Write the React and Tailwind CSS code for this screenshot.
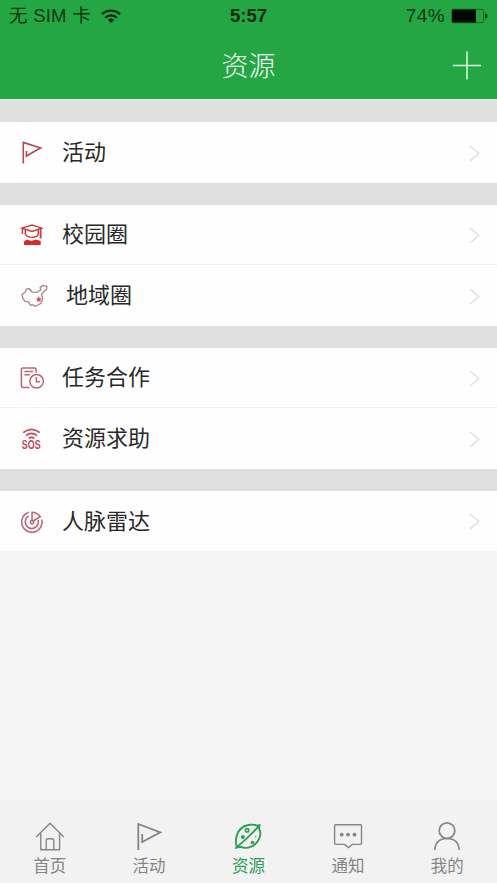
import { useState } from "react";

const GROUPS = [
  [{ label: "活动", icon: FlagIcon }],
  [
    { label: "校园圈", icon: CampusIcon },
    { label: "地域圈", icon: MapIcon, wide: true },
  ],
  [
    { label: "任务合作", icon: TaskIcon },
    { label: "资源求助", icon: SosIcon },
  ],
  [{ label: "人脉雷达", icon: RadarIcon }],
];

const TABS = [
  { label: "首页", icon: HomeTabIcon },
  { label: "活动", icon: FlagTabIcon },
  { label: "资源", icon: ResourceTabIcon },
  { label: "通知", icon: MessageTabIcon },
  { label: "我的", icon: UserTabIcon },
];

export default function App() {
  const [activeTab, setActiveTab] = useState(2);

  return (
    <div className="flex h-[883px] w-[497px] flex-col overflow-hidden bg-[#f5f5f5] font-['Liberation_Sans','Noto_Sans_CJK_SC',sans-serif]">
      <header className="h-[101px] shrink-0 border-b-2 border-[#d9eddf] bg-[#25a645]">
        <StatusBar />
        <div className="grid h-[67px] grid-cols-[60px_1fr_60px] items-center">
          <h1 className="col-start-2 pt-[2px] text-center text-[27px] leading-[66px] font-light text-[#f2fff4]">资源</h1>
          <button className="flex justify-center text-[#d9ffdf]" aria-label="添加">
            <svg className="h-[30px] w-[30px]" viewBox="0 0 30 30" fill="none" stroke="currentColor" strokeWidth="1.5">
              <path d="M1 14.5h28M15 .5v28" />
            </svg>
          </button>
        </div>
      </header>

      <main className="flex-1">
        <div className="flex flex-col gap-[22px] bg-[#e0e0e0] pt-[21px]">
          {GROUPS.map((rows) => (
            <section className="divide-y divide-[#f3f3f3] bg-[#fefefe]" key={rows[0].label}>
              {rows.map((row) => (
                <Row key={row.label} {...row} />
              ))}
            </section>
          ))}
        </div>
      </main>

      <nav className="grid h-[83px] shrink-0 grid-cols-5 bg-[#f2f2f2]">
        {TABS.map(({ label, icon: Icon }, index) => (
          <button
            className={`flex flex-col items-center pt-[20px] ${index === activeTab ? "text-[#2f9f58]" : "text-[#858585]"}`}
            key={label}
            onClick={() => setActiveTab(index)}
          >
            <Icon />
            <span className="mt-[2px] text-[16.5px] leading-[24px]">{label}</span>
          </button>
        ))}
      </nav>
    </div>
  );
}

function StatusBar() {
  return (
    <div className="grid h-8 grid-cols-3 items-center pr-[9px] pl-[9px] text-[18.5px] text-[#07380f]">
      <div className="flex items-center gap-[10px]">
        <span className="leading-8 tracking-[0.25px] whitespace-nowrap">无 SIM 卡</span>
        <svg className="h-[15px] w-[20px]" viewBox="0 0 20 15" fill="none" stroke="#042a0a" strokeWidth="2.4">
          <path d="M1 5.2a13 13 0 0 1 18 0M4.3 8.7a8.2 8.2 0 0 1 11.4 0" />
          <path d="M10 14 6.9 11a4.5 4.5 0 0 1 6.2 0Z" fill="#042a0a" stroke="none" />
        </svg>
      </div>
      <span className="text-center leading-8 font-bold text-[#062b0c]">5:57</span>
      <div className="flex items-center justify-end gap-[6px]">
        <span className="text-[19px] leading-8 tracking-[0.4px]">74%</span>
        <svg className="h-[16px] w-[37px]" viewBox="0 0 37 16">
          <rect x=".75" y="1.25" width="32" height="13.5" rx="2" fill="none" stroke="#11691f" />
          <rect x="1" y="1.5" width="24" height="13" rx="1" fill="#010a02" />
          <path d="M34 5.2q2.6.6 2.6 2.8T34 10.8Z" fill="#07380f" />
        </svg>
      </div>
    </div>
  );
}

function Row({ label, icon: Icon, wide }) {
  return (
    <button className="flex h-[60.5px] w-full items-center pt-[2px] pr-[17px] pl-[18px] text-left">
      <Icon />
      <span className={`flex-1 text-[22px] leading-[58px] text-[#292929] ${wide ? "pl-[16px]" : "pl-[12px]"}`}>{label}</span>
      <svg className="h-[17px] w-[11px]" viewBox="0 0 11 17" fill="none" stroke="#e0e0e0" strokeWidth="1.5">
        <path d="m1 1 8.8 7.5L1 16" />
      </svg>
    </button>
  );
}

function RowIcon({ children }) {
  return (
    <svg className="h-[28px] w-[32px] shrink-0" viewBox="0 0 32 28" fill="none" stroke="#c2505c" strokeWidth="1.4">
      {children}
    </svg>
  );
}

function FlagIcon() {
  return (
    <RowIcon>
      <path d="M5.3 24.5V3.4l17.3 5.5L8.4 17v-5" stroke="#b84756" strokeWidth="1.6" />
    </RowIcon>
  );
}

function CampusIcon() {
  return (
    <RowIcon>
      <g stroke="#c63c3e">
        <path d="M4 7.2 14 4.1l9.7 3.1L14 10.5Z" />
        <path d="M7.3 9v4.4q2 3 6.7 3t6.3-3V9M4.4 8v5" />
        <path d="M22.6 8v9.5" strokeWidth="1.9" />
      </g>
      <path d="M6 24v-3.4l3-2 4.4 1.5 4.3-1.5 5 1.3V24Z" fill="#d82a2e" stroke="none" />
    </RowIcon>
  );
}

function MapIcon() {
  return (
    <RowIcon>
      <path
        d="m4 12.2 3.3-1.9 1-3.2 2.9-.4 3.2 3.5 4.8.1 3.7-2.5-.8-2.1 2.6-2.4 4.1 1-.3 3.1-2.9 2.4-2 2.6.9 4-1.1 4.6-4 2.5-2.3.8-2-1.4-2.8.2-1.7-3.3-3.5-.5L4.6 16Z"
        stroke="#ad8389"
        strokeWidth="1.3"
        strokeLinejoin="round"
      />
      <path d="m20.8 14.3.9 2 2 .1-1.4 1.5.4 2.1-1.9-1.1-1.9 1.1.4-2.1-1.4-1.5 2-.1Z" fill="#d24e66" stroke="none" />
    </RowIcon>
  );
}

function TaskIcon() {
  return (
    <RowIcon>
      <g stroke="#bd6570" strokeWidth="1.5">
        <path d="M11.5 23.5H5.2q-1.8 0-1.8-1.7V5.5q0-1.6 1.7-1.6h11.3q1.7 0 1.7 1.6v3.3" />
        <path d="M6.4 7.5h8.8M6.4 10.8h5.5" />
        <circle cx="18.6" cy="17.2" r="6.8" />
        <path d="M18.4 13v4.7h3.5" />
      </g>
    </RowIcon>
  );
}

function SosIcon() {
  return (
    <RowIcon>
      <g stroke="#c44955" strokeWidth="1.7">
        <path d="M5.2 7.7q8.3-6.6 16.6 0M8 10.6q5.5-4.3 11 0M10.7 13.4q2.8-2.1 5.6 0" />
      </g>
      <text
        className="font-['Liberation_Sans',sans-serif] text-[12.5px] font-bold"
        x="13.3"
        y="24.2"
        textAnchor="middle"
        textLength="19"
        lengthAdjust="spacingAndGlyphs"
        fill="#c64955"
        stroke="none"
      >
        SOS
      </text>
    </RowIcon>
  );
}

function RadarIcon() {
  return (
    <RowIcon>
      <g stroke="#bd6270" strokeWidth="1.5">
        <path d="M10.7 4.2a10.3 10.3 0 1 0 13.2 7.3" />
        <path d="M10.7 8a6.6 6.6 0 1 0 9.4 3.8" />
        <path d="M14 3.5v10M14 4.2q5 .2 8.4 4.4L15 13" />
        <circle cx="14" cy="14.3" r="1.7" />
      </g>
    </RowIcon>
  );
}

function TabIcon({ children }) {
  return (
    <svg className="h-[32px] w-[32px]" viewBox="0 0 32 32" fill="none" stroke="currentColor" strokeWidth="1.4">
      {children}
    </svg>
  );
}

function HomeTabIcon() {
  return (
    <TabIcon>
      <path d="M2.2 17 16 3.3 29.8 17M6.8 13.5v16.2h18.8V13.5M12.2 29.5v-9q0-1.8 1.8-1.8h4q1.8 0 1.8 1.8v9" />
    </TabIcon>
  );
}

function FlagTabIcon() {
  return (
    <TabIcon>
      <path d="M5.3 30V4l22 8.3L9.2 22.1v-8.2" strokeWidth="1.8" />
    </TabIcon>
  );
}

function ResourceTabIcon() {
  return (
    <TabIcon>
      <path d="M4.7 26.2q-1.5-4.2-.3-9.2Q7 6.2 17.5 4.8q4.5-.6 7 .8l3-.4-.5 3.6q2.5 3.8.4 9.2-3 8-11.2 9.6-4.6.9-8-.9l-4 .9Z" strokeWidth="1.9" />
      <path d="M4.5 27.3Q11 22 15 18.2q6-5.5 11.7-12" strokeWidth="1.8" />
      <circle cx="15.1" cy="10.3" r="1.7" strokeWidth="1.7" />
      <circle cx="10.8" cy="17.1" r="2" fill="currentColor" stroke="none" />
      <circle cx="20.4" cy="22.5" r="1.8" fill="currentColor" stroke="none" />
      <circle cx="23.7" cy="16.5" r=".8" fill="currentColor" stroke="none" />
    </TabIcon>
  );
}

function MessageTabIcon() {
  return (
    <TabIcon>
      <path d="M3.8 4.7h24.5q1.2 0 1.2 1.2v17.3q0 1.2-1.2 1.2h-8l-3.8 3.2-3.8-3.2H3.8q-1.2 0-1.2-1.2V5.9q0-1.2 1.2-1.2Z" />
      <g fill="currentColor" stroke="none">
        <circle cx="9.7" cy="14.7" r="1.9" />
        <circle cx="16" cy="14.7" r="1.9" />
        <circle cx="22.5" cy="14.7" r="1.9" />
      </g>
    </TabIcon>
  );
}

function UserTabIcon() {
  return (
    <TabIcon>
      <circle cx="16" cy="10.7" r="7.8" strokeWidth="1.7" />
      <path d="M3.8 30Q4.5 18.5 16 18.5T28.2 30" strokeWidth="1.6" />
    </TabIcon>
  );
}
